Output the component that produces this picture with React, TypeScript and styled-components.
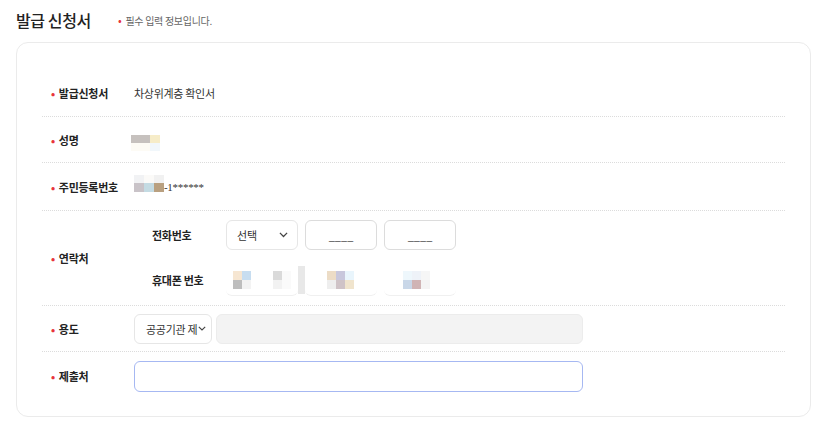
import React from "react";
import styled, { createGlobalStyle } from "styled-components";

const Global = createGlobalStyle`
  html, body { margin: 0; padding: 0; background: #fff; }
  body { font-family: "Noto Sans CJK KR", "Noto Sans", sans-serif; color: #222; }
  * { box-sizing: border-box; }
`;

const Page = styled.div`
  width: 826px;
  height: 424px;
  padding: 0 15px 0 16px;
`;

const Header = styled.div`
  display: flex;
  align-items: center;
  height: 42px;
  padding-bottom: 2px;
`;

const Title = styled.h2`
  margin: 0;
  font-size: 16px;
  font-weight: 500;
  color: #222;
  letter-spacing: -0.4px;
  width: 102px;
`;

const Note = styled.span`
  font-size: 10px;
  color: #666;
  letter-spacing: -0.3px;
`;

const Dot = styled.span`
  color: #e8343b;
  font-size: 11px;
  margin-right: 4px;
`;

const Card = styled.div`
  border: 1px solid #ebebeb;
  border-radius: 12px;
  height: 375px;
  padding: 26px 25px 0 25px;
`;

const Row = styled.div<{ $h: number; $last?: boolean }>`
  display: grid;
  grid-template-columns: 92px 1fr;
  align-items: center;
  height: ${(p) => p.$h}px;
  border-bottom: ${(p) => (p.$last ? "none" : "1px dotted #dcdcdc")};
`;

const Label = styled.div`
  padding-left: 9px;
  font-size: 11px;
  font-weight: 700;
  color: #222;
  letter-spacing: -0.3px;
  display: flex;
  align-items: center;
`;

const Value = styled.div`
  font-size: 11px;
  color: #333;
  letter-spacing: -0.3px;
  display: flex;
  align-items: center;
`;

const SubGrid = styled.div`
  display: grid;
  grid-template-columns: 92px 1fr;
  row-gap: 14px;
  align-items: center;
`;

const SubLabel = styled.div`
  padding-left: 18px;
  font-size: 11px;
  font-weight: 700;
  color: #222;
  letter-spacing: -0.3px;
`;

const Fields = styled.div`
  display: flex;
  gap: 7px;
`;

const Box = styled.div<{ $w: number }>`
  width: ${(p) => p.$w}px;
  height: 30px;
  border: 1px solid #dcdcdc;
  border-radius: 6px;
  background: #fff;
  font-size: 11px;
  color: #333;
  display: flex;
  align-items: center;
`;

const SelectBox = styled(Box)`
  justify-content: space-between;
  padding: 0 9px 0 10px;
  border-color: #e6e6e6;
`;

const PurposeSelect = styled(Box)`
  padding: 0 0 0 11px;
  gap: 1px;
  border-color: #e6e6e6;
`;

const BlankInput = styled(Box)`
  justify-content: center;
  color: #444;
  font-size: 11px;
`;

const GrayInput = styled.div`
  width: 367px;
  height: 30px;
  border-radius: 6px;
  background: #f3f3f3;
  border: 1px solid #ececec;
  margin-left: 4px;
`;

const FocusInput = styled.div`
  width: 449px;
  height: 31px;
  border-radius: 6px;
  border: 1px solid #a6b8f2;
  background: #fff;
`;

const Mosaic = styled.div<{ $ml?: number; $cols?: number }>`
  display: grid;
  grid-template-columns: repeat(${(p) => p.$cols ?? 2}, 9px);
  grid-auto-rows: 9px;
  margin-left: ${(p) => p.$ml ?? 0}px;
`;

const Cell = styled.div<{ $c: string }>`
  background: ${(p) => p.$c};
`;

const MosaicBox = styled.div`
  display: flex;
  align-items: center;
  width: 72px;
  height: 32px;
  border-radius: 6px;
  border-bottom: 1px solid #f0f0f0;
`;

const Strip = styled.div`
  width: 7px;
  height: 28px;
  background: #e2e2e2;
  margin-left: -7px;
  opacity: 0.8;
`;

const Masked = styled.span`
  display: inline-flex;
  align-items: center;
  font-family: "Liberation Serif", serif;
  font-size: 11px;
  color: #333;
`;

const RrnMosaic = styled.div`
  display: grid;
  grid-template-columns: repeat(3, 10px);
  grid-template-rows: 8px 9px;
  margin-top: -6px;
`;

const NameMosaic = styled.div`
  display: grid;
  grid-template-columns: 19px 10px;
  grid-template-rows: 8px 8px;
  margin-left: -3px;
  margin-top: 6px;
`;

const Chevron = ({ size = 9 }: { size?: number }) => (
  <svg width={size} height={size * 0.6} viewBox="0 0 10 6" fill="none">
    <polyline points="1,1 5,5 9,1" stroke="#444" strokeWidth="1.4" />
  </svg>
);

const Req = ({ children }: { children: React.ReactNode }) => (
  <Label>
    <Dot>•</Dot>
    {children}
  </Label>
);

export default function App() {
  return (
    <Page>
      <Global />
      <Header>
        <Title>발급 신청서</Title>
        <Note>
          <Dot>•</Dot>필수 입력 정보입니다.
        </Note>
      </Header>
      <Card>
        <Row $h={48}>
          <Req>발급신청서</Req>
          <Value>차상위계층 확인서</Value>
        </Row>
        <Row $h={46}>
          <Req>성명</Req>
          <Value>
            <NameMosaic>
              <Cell $c="#c6c1be" />
              <Cell $c="#f6ecc8" />
              <Cell $c="#fdfbf5" />
              <Cell $c="#f1f7fb" />
            </NameMosaic>
          </Value>
        </Row>
        <Row $h={48}>
          <Req>주민등록번호</Req>
          <Value>
            <Masked>
              <RrnMosaic>
                <Cell $c="#f1f2f4" />
                <Cell $c="#fbfaf8" />
                <Cell $c="#f1f1f1" />
                <Cell $c="#c9c3c8" />
                <Cell $c="#c4dbe3" />
                <Cell $c="#b9a080" />
              </RrnMosaic>
              -1******
            </Masked>
          </Value>
        </Row>
        <Row $h={95}>
          <Req>연락처</Req>
          <SubGrid>
            <SubLabel>전화번호</SubLabel>
            <Fields>
              <SelectBox $w={72}>
                선택
                <Chevron />
              </SelectBox>
              <BlankInput $w={72}>____</BlankInput>
              <BlankInput $w={72}>____</BlankInput>
            </Fields>
            <SubLabel>휴대폰 번호</SubLabel>
            <Fields>
              <MosaicBox>
                <Mosaic $ml={7}>
                  <Cell $c="#f6e6d2" />
                  <Cell $c="#c7ddf0" />
                  <Cell $c="#bebebe" />
                  <Cell $c="#f3f3f3" />
                </Mosaic>
                <Mosaic $ml={22}>
                  <Cell $c="#dadada" />
                  <Cell $c="#fafafa" />
                  <Cell $c="#f2f2f2" />
                  <Cell $c="#fafafa" />
                </Mosaic>
              </MosaicBox>
              <MosaicBox>
                <Strip />
                <Mosaic $ml={22} $cols={3}>
                  <Cell $c="#ecdcc6" />
                  <Cell $c="#c8c7dc" />
                  <Cell $c="#e9f5fc" />
                  <Cell $c="#eeeeee" />
                  <Cell $c="#cfc3c7" />
                  <Cell $c="#f0e4cd" />
                </Mosaic>
              </MosaicBox>
              <MosaicBox>
                <Mosaic $ml={19} $cols={3}>
                  <Cell $c="#eef7fc" />
                  <Cell $c="#eef2f8" />
                  <Cell $c="#f6f6f6" />
                  <Cell $c="#c9d7e8" />
                  <Cell $c="#d0b4b5" />
                  <Cell $c="#f4f4f4" />
                </Mosaic>
              </MosaicBox>
            </Fields>
          </SubGrid>
        </Row>
        <Row $h={46}>
          <Req>용도</Req>
          <Value>
            <PurposeSelect $w={78}>
              공공기관 제
              <Chevron size={8} />
            </PurposeSelect>
            <GrayInput />
          </Value>
        </Row>
        <Row $h={48} $last>
          <Req>제출처</Req>
          <Value>
            <FocusInput />
          </Value>
        </Row>
      </Card>
    </Page>
  );
}
